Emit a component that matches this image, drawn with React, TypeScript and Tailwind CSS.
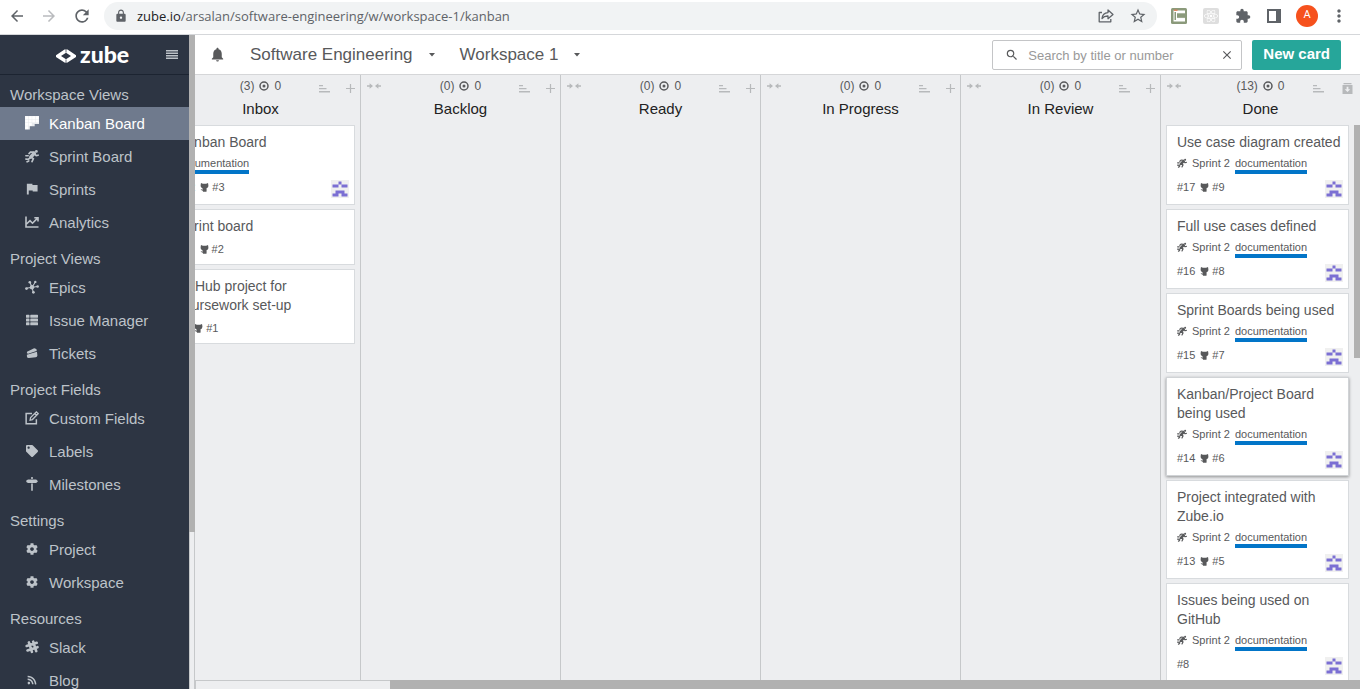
import type { ReactNode } from 'react';
import { FaTag, FaThList, FaRss, FaCog, FaReact } from 'react-icons/fa';
import {
  MdArrowBack,
  MdArrowForward,
  MdRefresh,
  MdStarBorder,
  MdMoreVert,
  MdNotifications,
  MdSearch,
  MdClose,
  MdLock,
  MdExtension,
} from 'react-icons/md';

type SvgProps = { className?: string };

function KanbanIcon({ className }: SvgProps) {
  const heights = [4, 3, 2, 2];
  return (
    <svg viewBox="0 0 13 13" className={className} fill="currentColor" aria-hidden="true">
      <path d="M0 0h13v7.500H9v2H4.500V12.500H0z" opacity="0.85" />
      {heights.flatMap((h, c) =>
        Array.from({ length: h }, (_, r) => (
          <rect key={`${c}-${r}`} x={c * 3.25 + 0.2} y={r * 3.1 + 0.2} width="2.8" height="2.7" />
        )),
      )}
    </svg>
  );
}

function SprintIcon({ className }: SvgProps) {
  return (
    <svg viewBox="0 0 16 16" className={className} fill="none" stroke="currentColor" strokeWidth="2" strokeLinecap="round" strokeLinejoin="round" aria-hidden="true">
      <circle cx="13" cy="2.800" r="1.600" fill="currentColor" stroke="none" />
      <path d="M10.500 5 6.800 9" strokeWidth="4.200" />
      <path d="M10.300 3.600 6.500 3.400 4.600 5.200M11.400 5.800l1.200 1.800 2.400-.5M7 9.500l2.600 1.500-1.600 3.400M6 10 4 11.700 1 11.500M1 7.700h2.600M2.400 14.600l1.900-1" strokeWidth="1.900" />
    </svg>
  );
}

function FlagIcon({ className }: SvgProps) {
  return (
    <svg viewBox="0 0 14 14" className={className} fill="currentColor" aria-hidden="true">
      <path d="M1 .8h6.500v1.400h6v7.600H7.800V8.700H3.200v4.800H1z" />
    </svg>
  );
}

function ChartIcon({ className }: SvgProps) {
  return (
    <svg viewBox="0 0 14 14" className={className} fill="none" stroke="currentColor" strokeWidth="1.600" aria-hidden="true">
      <path d="M1 1.500v10.500h12.500M1.500 9 5 5.600l2.500 2.600L12 3.600M9.300 2.800h3.700v3.700" />
    </svg>
  );
}

function EpicsIcon({ className }: SvgProps) {
  return (
    <svg viewBox="0 0 14 14" className={className} fill="currentColor" aria-hidden="true">
      <path d="M7 7.300 4.800 2M7 7.300 12.600 6.500M7 7.300 1.500 8.300M7 7.300 8.300 12.300M7 7.300 10.200 2.200" stroke="currentColor" strokeWidth="1.100" />
      <circle cx="7" cy="7.300" r="2.200" />
      <circle cx="4.800" cy="2.300" r="1.300" />
      <circle cx="10.300" cy="1.900" r="1.200" />
      <circle cx="12.600" cy="6.500" r="1.300" />
      <circle cx="1.500" cy="8.600" r="1.400" />
      <circle cx="8.400" cy="12.300" r="1.400" />
    </svg>
  );
}

function TicketsIcon({ className }: SvgProps) {
  return (
    <svg viewBox="0 0 14 14" className={className} fill="currentColor" aria-hidden="true">
      <path d="M1.200 5.500 8.800 1.700q1.300-.5 2.500.300l1.300 1.300-.3 1.300L2.600 8 1 7.200z" />
      <path d="M1 9 12.800 5.500l.5 4.500q-.2 1.700-1.900 1.900L3.300 12.900q-2.100 0-2.200-1.900z" />
    </svg>
  );
}

function EditIcon({ className }: SvgProps) {
  return (
    <svg viewBox="0 0 16 16" className={className} fill="none" stroke="currentColor" strokeWidth="1.700" aria-hidden="true">
      <path d="M8 2.800H1.300v11.900H13V9.500" />
      <path d="M5.800 10.500l.6-3L13 1l2 2-6.500 6.800zM11.300 2.800l2 2" strokeWidth="1.500" />
    </svg>
  );
}

function MilestoneIcon({ className }: SvgProps) {
  return (
    <svg viewBox="0 0 14 14" className={className} fill="currentColor" aria-hidden="true">
      <path d="M6.200 0h1.600v2H6.200zM3 2.500h8.200L13 4.200l-1.800 1.700H3L1.300 4.900V3.500zM6.200 6.500h1.600v7.300H6.200z" />
    </svg>
  );
}

function SlackIcon({ className }: SvgProps) {
  return (
    <svg viewBox="0 0 14 14" className={className} fill="none" stroke="currentColor" strokeWidth="2.600" strokeLinecap="round" aria-hidden="true">
      <path d="M3.900 2.400l3 9.400M8.200 1.700l3 9.400M1.700 6l10-3.200M2.500 10.400l10-3.200" />
    </svg>
  );
}

function GithubIcon({ className }: SvgProps) {
  return (
    <svg viewBox="0 0 10 10" className={className} fill="currentColor" aria-hidden="true">
      <path d="M1.100 0 3.200.8h3.600L8.900 0l.3 1.800q.7 3.400-2.100 4.200l.3 1.500-.2 2.300H3.300l-.1-1.300Q1.600 8.600.7 6.800l1 .2.900.7.400-1.700Q.2 5.200.8 1.800z" />
    </svg>
  );
}

function IssueIcon({ className }: SvgProps) {
  return (
    <svg viewBox="0 0 10 10" className={className} fill="none" stroke="currentColor" strokeWidth="1.500" aria-hidden="true">
      <circle cx="5" cy="5" r="4" />
      <circle cx="5" cy="5" r="1.500" fill="currentColor" stroke="none" />
    </svg>
  );
}

function CollapseIcon({ className }: SvgProps) {
  return (
    <svg viewBox="0 0 14 6" className={className} fill="currentColor" aria-hidden="true">
      <path d="M0 2.300h2.600V.2L6 3 2.600 5.800V3.700H0zM14 2.300h-2.600V.2L8 3l3.400 2.800V3.700H14z" />
    </svg>
  );
}

function SortIcon({ className }: SvgProps) {
  return (
    <svg viewBox="0 0 11 8" className={className} fill="currentColor" aria-hidden="true">
      <path d="M0 0h4v1.300H0zM0 3h7.500v1.300H0zM0 6h11v1.400H0z" />
    </svg>
  );
}

function PlusIcon({ className }: SvgProps) {
  return (
    <svg viewBox="0 0 9 9" className={className} stroke="currentColor" strokeWidth="1.200" aria-hidden="true">
      <path d="M4.500 0v9M0 4.500h9" />
    </svg>
  );
}

function ArchiveIcon({ className }: SvgProps) {
  return (
    <svg viewBox="0 0 11 11" className={className} fill="currentColor" aria-hidden="true">
      <path d="M1.500 0h8v1.300h-8zM.5 2h10v9H.5zM4.600 3.800v2.400H2.700L5.500 9l2.800-2.800H6.400V3.800z" fillRule="evenodd" />
    </svg>
  );
}

function CaretIcon() {
  return (
    <svg viewBox="0 0 6 4" className="mx-0.5 h-1 w-[6px]" fill="currentColor" aria-hidden="true">
      <path d="M0 0h6L3 3.500z" />
    </svg>
  );
}

function ZubeLogo() {
  return (
    <svg viewBox="0 0 20 14" className="h-[14px] w-5" fill="white" aria-hidden="true">
      <path d="M0 6.300 8.500.6Q10-.2 11.500.6L20 6.300v1.600l-8.500 5.500q-1.500.8-3 0L0 7.900zM5 7l5 3.300L15 7l-5-3.300z" fillRule="evenodd" />
      <path d="M10 0v3.500M10 10.500V14" stroke="#2d3543" strokeWidth="0.700" />
    </svg>
  );
}

function Avatar() {
  return (
    <svg viewBox="0 0 12 12" className="h-[18px] w-[18px] shrink-0" role="img" aria-label="Assignee">
      <path d="M0 0h12v12H0z" fill="#f0f0f0" />
      <path d="M5 1h2v2H5zM1 3h4v2H1zM7 3h4v2H7zM3 7h6v2H3zM1 9h4v2H1zM7 9h4v2H7z" fill="#7b6fd3" />
    </svg>
  );
}

function ShareIcon({ className }: SvgProps) {
  return (
    <svg viewBox="0 0 16 16" className={className} fill="none" stroke="currentColor" strokeWidth="1.300" strokeLinejoin="round" aria-hidden="true">
      <path d="M4 4.500H1.200v9.300h11.600V11" />
      <path d="M4 10.500c.4-3.600 2.500-5.700 6-5.900V2l5 4.400-5 4.300V8C7.500 7.900 5.500 8.600 4 10.500z" />
    </svg>
  );
}

type NavItem = { label: string; icon: ReactNode; active?: boolean };
type NavSection = { title: string; items: NavItem[] };

const icon = 'h-[14px] w-[14px]';

const sections: NavSection[] = [
  {
    title: 'Workspace Views',
    items: [
      { label: 'Kanban Board', icon: <KanbanIcon className={icon} />, active: true },
      { label: 'Sprint Board', icon: <SprintIcon className={icon} /> },
      { label: 'Sprints', icon: <FlagIcon className="h-3 w-3" /> },
      { label: 'Analytics', icon: <ChartIcon className={icon} /> },
    ],
  },
  {
    title: 'Project Views',
    items: [
      { label: 'Epics', icon: <EpicsIcon className={icon} /> },
      { label: 'Issue Manager', icon: <FaThList className="h-3 w-3" /> },
      { label: 'Tickets', icon: <TicketsIcon className="h-3 w-3" /> },
    ],
  },
  {
    title: 'Project Fields',
    items: [
      { label: 'Custom Fields', icon: <EditIcon className={icon} /> },
      { label: 'Labels', icon: <FaTag className="h-3 w-3" /> },
      { label: 'Milestones', icon: <MilestoneIcon className={icon} /> },
    ],
  },
  {
    title: 'Settings',
    items: [
      { label: 'Project', icon: <FaCog className="h-3 w-3" /> },
      { label: 'Workspace', icon: <FaCog className="h-3 w-3" /> },
    ],
  },
  {
    title: 'Resources',
    items: [
      { label: 'Slack', icon: <SlackIcon className={icon} /> },
      { label: 'Blog', icon: <FaRss className="h-[10px] w-[10px]" /> },
    ],
  },
];

type Card = {
  title: string;
  number: string;
  github?: string;
  sprint?: string;
  label?: string;
  avatar?: boolean;
  raised?: boolean;
};

const inboxCards: Card[] = [
  { title: 'Kanban Board', number: '#12', github: '#3', label: 'documentation', avatar: true },
  { title: 'Sprint board', number: '#11', github: '#2' },
  { title: 'GitHub project for coursework set-up', number: '#7', github: '#1' },
];

const done = { sprint: 'Sprint 2', label: 'documentation', avatar: true };

const doneCards: Card[] = [
  { ...done, title: 'Use case diagram created', number: '#17', github: '#9' },
  { ...done, title: 'Full use cases defined', number: '#16', github: '#8' },
  { ...done, title: 'Sprint Boards being used', number: '#15', github: '#7' },
  { ...done, title: 'Kanban/Project Board being used', number: '#14', github: '#6', raised: true },
  { ...done, title: 'Project integrated with Zube.io', number: '#13', github: '#5' },
  { ...done, title: 'Issues being used on GitHub', number: '#8' },
];

const columns: { name: string; count: number; cards: Card[] }[] = [
  { name: 'Inbox', count: 3, cards: inboxCards },
  { name: 'Backlog', count: 0, cards: [] },
  { name: 'Ready', count: 0, cards: [] },
  { name: 'In Progress', count: 0, cards: [] },
  { name: 'In Review', count: 0, cards: [] },
  { name: 'Done', count: 13, cards: doneCards },
];

function BoardCard({ card }: { card: Card }) {
  return (
    <article
      className={`shrink-0 border bg-white pt-[7px] pr-[5px] pl-[10px] text-[#58595b] ${
        card.label ? 'pb-[6px]' : 'pb-2'
      } ${card.raised ? 'border-[#d0d3d6] shadow-[0_1px_3px_rgba(0,0,0,0.4)]' : 'border-[#d8dbde]'}`}
    >
      <h3 className="text-sm leading-[19px]">{card.title}</h3>
      {card.label && (
        <div className="flex h-[21px] items-center gap-[5px] text-[11px] leading-4">
          {card.sprint && (
            <>
              <SprintIcon className="h-[10px] w-[10px]" />
              <span>{card.sprint}</span>
            </>
          )}
          <a href="#documentation" className="border-b-4 border-[#0275c8] pt-1 leading-[14px]">
            {card.label}
          </a>
        </div>
      )}
      <div className={`flex justify-between text-[11px] ${card.label ? 'pt-[7px]' : 'pt-[6px]'}`}>
        <div className="flex h-[14px] items-center gap-[5px]">
          <span>{card.number}</span>
          {card.github && (
            <span className="flex items-center gap-[3px]">
              <GithubIcon className="h-[9px] w-[9px]" />
              {card.github}
            </span>
          )}
        </div>
        {card.avatar && <Avatar />}
      </div>
    </article>
  );
}

function Sidebar() {
  return (
    <aside className="flex w-[195px] shrink-0">
      <div className="min-w-0 flex-1 overflow-hidden bg-[#2d3543] text-[#bdc3c9]">
        <div className="flex h-10 items-center justify-between border-b border-[#1c2431] pr-[11px] pl-[56px]">
          <a href="#home" className="flex items-center gap-1 pt-0.5 text-white">
            <ZubeLogo />
            <span className="pb-1 font-[Lato] text-[23px] leading-6 font-black">zube</span>
          </a>
          <button aria-label="Toggle menu">
            <svg viewBox="0 0 12 9" className="h-[9px] w-3" fill="currentColor" aria-hidden="true">
              <path d="M0 0h12v1.500H0zM0 2.500h12v1.500H0zM0 5h12v1.500H0zM0 7.500h12V9H0z" />
            </svg>
          </button>
        </div>
        <nav>
          {sections.map((section) => (
            <section key={section.title}>
              <h2 className="h-8 px-[10px] pt-2 text-[15px] leading-6">{section.title}</h2>
              <ul>
                {section.items.map((item) => (
                  <li key={item.label}>
                    <a
                      href="#view"
                      className={`flex h-[33px] items-center gap-[10px] pl-6 text-[15px] ${
                        item.active ? 'bg-[#6f7a8d] text-white' : ''
                      }`}
                    >
                      <span className="flex w-[15px] justify-center pb-px">{item.icon}</span>
                      <span className="pt-0.5">{item.label}</span>
                    </a>
                  </li>
                ))}
              </ul>
            </section>
          ))}
        </nav>
      </div>
      <div className="flex w-[6px] flex-col border-r border-l border-[#c6c8ca] bg-[#edeef0]">
        <div className="-mx-px h-[76%] bg-[#b1b1b1]" />
      </div>
    </aside>
  );
}

function BrowserBar() {
  return (
    <header className="flex h-[35px] shrink-0 items-center border-b border-[#d5d7da] bg-white pr-[15px] pb-[3px] pl-2 text-[#5f6368]">
      <div className="flex items-center gap-[14px]">
        <button aria-label="Back">
          <MdArrowBack className="h-[18px] w-[18px]" />
        </button>
        <button aria-label="Forward" className="text-[#b9bbbe]">
          <MdArrowForward className="h-[18px] w-[18px]" />
        </button>
        <button aria-label="Reload">
          <MdRefresh className="h-5 w-5" />
        </button>
      </div>
      <div className="ml-3 flex h-7 flex-1 items-center rounded-full bg-[#f1f3f4] pr-[10px] pl-[10px]">
        <MdLock className="h-[14px] w-[14px]" />
        <p className="ml-[9px] flex-1 pt-0.5 font-['Open_Sans',sans-serif] text-[13px]">
          <span className="text-[#202124]">zube.io</span>/arsalan/software-engineering/w/workspace-1/kanban
        </p>
        <div className="flex items-center gap-[15px]">
          <button aria-label="Share">
            <ShareIcon className="h-4 w-4" />
          </button>
          <button aria-label="Bookmark">
            <MdStarBorder className="h-[18px] w-[18px]" />
          </button>
        </div>
      </div>
      <div className="ml-[14px] flex items-center gap-4">
        <svg viewBox="0 0 16 16" className="h-4 w-4" aria-hidden="true">
          <rect width="16" height="16" rx="1.500" fill="#8b9a7b" />
          <path d="M2.500 2.500H14v3.200l-1-.9-1 .9-1-.9-1 .9-1-.9-1 .9-1-.9-1 .9v4.600l1-.9 1 .9 1-.9 1 .9 1-.9 1 .9 1-.9 1 .9v3.200H2.500z" fill="#fff" />
          <path d="M3.500 4h1.500v8H3.500z" fill="#8b9a7b" />
          <path d="M3 2.200h3.500" stroke="#e5794f" strokeWidth="1.200" />
        </svg>
        <span className="flex h-4 w-4 items-center justify-center rounded-xs bg-[#dedede] text-white">
          <FaReact className="h-[14px] w-[14px]" />
        </span>
        <MdExtension className="h-4 w-4" />
        <svg viewBox="0 0 14 14" className="h-[14px] w-[14px]" aria-hidden="true">
          <path d="M0 0h14v14H0zM2 2v10h7V2z" fill="currentColor" fillRule="evenodd" />
        </svg>
        <button className="-mx-px flex h-[22px] w-[22px] items-center justify-center rounded-full bg-[#f6511d] font-[Roboto] text-[11px] text-white">
          A
        </button>
        <button aria-label="Browser menu" className="-mx-1">
          <MdMoreVert className="h-5 w-5" />
        </button>
      </div>
    </header>
  );
}

function TopBar() {
  return (
    <div className="flex h-10 shrink-0 items-center border-b border-[#d5d6d8] bg-white pr-[19px] pl-[14px] text-[#58595b]">
      <button aria-label="Notifications">
        <MdNotifications className="h-[17px] w-[17px]" />
      </button>
      <button className="ml-6 flex items-center gap-[14px] text-[17px]">
        Software Engineering
        <CaretIcon />
      </button>
      <button className="ml-[23px] flex items-center gap-[14px] text-[17px]">
        Workspace 1
        <CaretIcon />
      </button>
      <div className="ml-auto flex h-[30px] w-[250px] items-center rounded-xs border border-[#c4c5c7] pr-[7px] pl-3">
        <MdSearch className="h-[14px] w-[14px]" />
        <input
          aria-label="Search"
          placeholder="Search by title or number"
          className="ml-[9px] min-w-0 flex-1 pt-0.5 text-[13px] placeholder:text-[#999]"
        />
        <button aria-label="Clear search">
          <MdClose className="h-[14px] w-[14px]" />
        </button>
      </div>
      <button className="ml-[10px] h-[30px] rounded-xs bg-[#26a69a] px-[11px] text-[15px] font-bold text-white">
        New card
      </button>
    </div>
  );
}

function Column({ column, last }: { column: (typeof columns)[number]; last: boolean }) {
  return (
    <section className="flex w-[200px] shrink-0 flex-col border-l border-[#c6c8ca]">
      <header className="h-[50px] shrink-0 pt-[3px] text-center">
        <div className="grid h-4 grid-cols-3 items-center text-[#b7b9bb]">
          <button aria-label={`Collapse ${column.name}`} className="pb-0.5 pl-[6px]">
            <CollapseIcon className="h-[6px] w-[14px]" />
          </button>
          <p className="flex items-center justify-center gap-[5px] pb-px text-xs text-[#58595b]">
            <span>({column.count})</span>
            <IssueIcon className="h-[10px] w-[10px]" />
            <span>0</span>
          </p>
          <div className={`flex items-center justify-end pt-[4px] ${last ? 'gap-[18px] pr-[7px]' : 'gap-4 pr-[5px]'}`}>
            <button aria-label={`Sort ${column.name}`}>
              <SortIcon className="h-2 w-[11px]" />
            </button>
            <button aria-label={last ? 'Archive cards' : `Add card to ${column.name}`}>
              {last ? <ArchiveIcon className="h-[11px] w-[11px]" /> : <PlusIcon className="h-[9px] w-[9px]" />}
            </button>
          </div>
        </div>
        <h2 className="pt-[5px] text-[15px] leading-[19px] text-[#222]">{column.name}</h2>
      </header>
      <div className="flex min-h-0 flex-1">
        <div className="flex min-w-0 flex-1 flex-col gap-1 overflow-hidden px-[5px]">
          {column.cards.map((card) => (
            <BoardCard key={card.title} card={card} />
          ))}
        </div>
        {last && (
          <div className="w-[6px]">
            <div className="h-[42%] bg-[#b1b1b1]" />
          </div>
        )}
      </div>
    </section>
  );
}

export default function App() {
  return (
    <div className="flex h-screen flex-col overflow-hidden bg-[#edeef0] font-['Liberation_Sans',Arial,sans-serif]">
      <BrowserBar />
      <div className="flex min-h-0 flex-1">
        <Sidebar />
        <main className="flex min-w-0 flex-1 flex-col">
          <TopBar />
          <div className="flex min-h-0 flex-1 justify-end overflow-hidden">
            {columns.map((column, i) => (
              <Column key={column.name} column={column} last={i === columns.length - 1} />
            ))}
          </div>
          <div className="flex h-[9px] shrink-0 justify-end border-t border-l border-[#c6c8ca]">
            <div className="-mt-px w-5/6 bg-[#b1b1b1]" />
          </div>
        </main>
      </div>
    </div>
  );
}
